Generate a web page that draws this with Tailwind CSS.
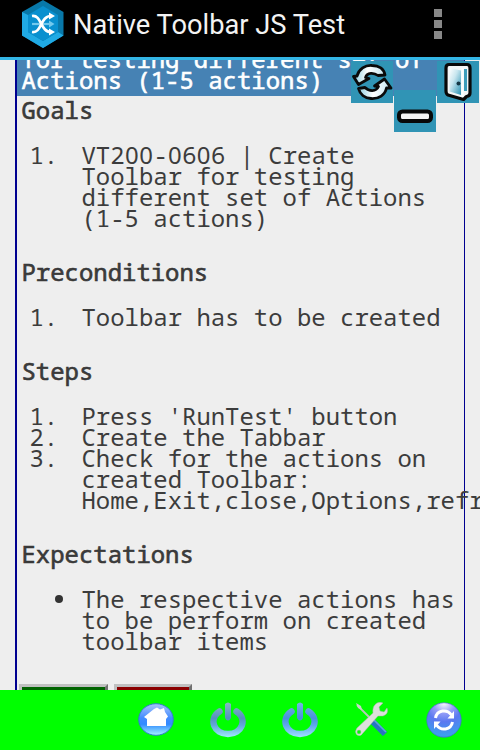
<!DOCTYPE html>
<html lang="en">
<head>
<meta charset="utf-8">
<title>Native Toolbar JS Test</title>
<script src="https://cdn.jsdelivr.net/npm/@tailwindcss/browser@4"></script>
</head>
<body class="w-[480px] h-[750px] overflow-hidden bg-[#eee] flex flex-col text-[#3c3c3c]">
<header class="h-[60px] shrink-0 bg-black border-b-[3px] border-[#33b5e5] flex items-start justify-between pl-[21px] pr-[38px]">
  <div class="flex">
    <svg class="w-[44px] h-[48px] shrink-0" viewBox="0 0 44 48">
      <path d="M22 0 42.500 12V35.500L22 48 1 35.500V12Z" fill="#0878a9"/>
      <path d="M1 12 7 15V32L22 41 37 32 42.500 35.500 22 48 1 35.500Z" fill="#20aae4"/>
      <path d="M22 6 37 15V32L22 41 7 32V15Z" fill="#0990cf"/>
      <path d="M11 24H30" fill="none" stroke="#72c9ed" stroke-width="2.200"/><path d="M28 20.500 33.500 24 28 27.500Z" fill="#72c9ed"/>
      <g fill="none" stroke="#fff" stroke-width="2.700"><path d="M11 16C21 14.500 19 32 30 32M11 32C21 33.500 19 16 30 16"/></g>
      <path d="M28 12.500 34 16 28 19.500ZM28 28.500 34 32 28 35.500Z" fill="#fff"/>
    </svg>
    <h1 class="ml-[8px] mt-[7px] font-[Roboto,sans-serif] font-normal text-[27.250px] leading-[36px] text-[#f3f3f3] whitespace-nowrap">Native Toolbar JS Test</h1>
  </div>
  <div class="flex flex-col gap-[3px] mt-[9px]"><i class="size-[8px] bg-[#888]"></i><i class="size-[8px] bg-[#888]"></i><i class="size-[8px] bg-[#888]"></i></div>
</header>
<main class="relative h-[630px] shrink-0 overflow-hidden font-['Noto_Sans_Mono','DejaVu_Sans_Mono',monospace] text-[23.950px] leading-[21px]">
  <div class="ml-[15px] w-[450px] h-[640px] border-l-2 border-r border-[#000090]">
    <div class="h-[36px] bg-[#4682b4] text-white pl-[4.500px] flex flex-col justify-end pb-[6px] overflow-hidden whitespace-nowrap [-webkit-text-stroke:0.6px_white]"><p>for testing different set of</p><p>Actions (1-5 actions)</p></div>
    <section class="pt-[3px] pl-[4.500px] whitespace-nowrap">
      <h2 class="[-webkit-text-stroke:0.6px_#333]">Goals</h2>
      <div class="flex mt-[24px]"><span class="w-[60px] pl-[8px] shrink-0">1.</span><p>VT2<span class="inline-block w-[14.4px] h-[21px] align-top text-center font-['Noto_Sans']">0</span><span class="inline-block w-[14.4px] h-[21px] align-top text-center font-['Noto_Sans']">0</span>-<span class="inline-block w-[14.4px] h-[21px] align-top text-center font-['Noto_Sans']">0</span>6<span class="inline-block w-[14.4px] h-[21px] align-top text-center font-['Noto_Sans']">0</span>6 | Create<br>Toolbar for testing<br>different set of Actions<br>(1-5 actions)</p></div>
      <h2 class="mt-[33px] [-webkit-text-stroke:0.6px_#333]">Preconditions</h2>
      <div class="flex mt-[24px]"><span class="w-[60px] pl-[8px] shrink-0">1.</span><p>Toolbar has to be created</p></div>
      <h2 class="mt-[33px] [-webkit-text-stroke:0.6px_#333]">Steps</h2>
      <div class="flex mt-[24px]"><span class="w-[60px] pl-[8px] shrink-0">1.</span><p>Press 'RunTest' button</p></div>
      <div class="flex"><span class="w-[60px] pl-[8px] shrink-0">2.</span><p>Create the Tabbar</p></div>
      <div class="flex"><span class="w-[60px] pl-[8px] shrink-0">3.</span><p>Check for the actions on<br>created Toolbar:<br>Home,Exit,close,Options,refresh</p></div>
      <h2 class="mt-[33px] [-webkit-text-stroke:0.6px_#333]">Expectations</h2>
      <div class="flex mt-[24px]"><span class="w-[60px] pl-[33.500px] pt-[7px] shrink-0"><i class="block size-[8px] rounded-full bg-[#333]"></i></span><p>The respective actions has<br>to be perform on created<br>toolbar items</p></div>
    </section>
    <div class="flex gap-[6px] pl-[2px] mt-[33px]">
      <div class="w-[89px] h-[40px] border-[3px] border-t-[#c0c0c0] border-l-[#c0c0c0] border-r-[#707070] border-b-[#707070] bg-[#006400]"></div>
      <div class="w-[78px] h-[40px] border-[3px] border-t-[#c0c0c0] border-l-[#c0c0c0] border-r-[#707070] border-b-[#707070] bg-[#8b0000]"></div>
    </div>
  </div>
  <div class="absolute left-[351px] top-[1px] size-[42px] bg-[#3094b5]">
    <svg viewBox="0 0 42 42" class="size-full"><defs><linearGradient id="r"><stop stop-color="#8fcfe1"/><stop offset=".45" stop-color="#fff"/><stop offset="1" stop-color="#c4e5ef"/></linearGradient></defs>
    <g fill="url(#r)" stroke="#0a0a0a" stroke-width="2.800" stroke-linejoin="round"><path d="M6 15C8 8 14 4 21 4.500 28 4.500 33 8 34 14L27 14.500C23 11.500 16 11 14.500 16.500L18 17.500 7.500 23.500 2.500 15.500Z"/><path d="M7.500 27.500 14 26.500C18 30.500 25 31 27.500 25.500L23.500 25 33.500 18 40 27 35.500 27C34 34 28 38 20 37.500 14 37.500 9 33.500 7.500 27.500Z"/></g></svg>
  </div>
  <div class="absolute left-[394px] top-[30px] size-[42px] bg-[#3094b5]"><svg viewBox="0 0 42 42" class="size-full"><rect x="5" y="21.500" width="32" height="9.500" rx="3.500" fill="#f4f4f4" stroke="#080808" stroke-width="4"/></svg></div>
  <div class="absolute left-[437px] top-[1px] size-[42px] bg-[#3094b5]">
    <svg viewBox="0 0 42 42" class="size-full"><defs><linearGradient id="d" x1="0" y1="0" x2="1" y2="1"><stop stop-color="#fff"/><stop offset=".4" stop-color="#c8e6ef"/><stop offset="1" stop-color="#2790b2"/></linearGradient></defs>
    <path d="M12 3.500H30Q33 3.500 33 7V32Q33 35 29.500 35.500L26.500 38.500 11 34Q9 33 9 30V7Q9 3.500 12 3.500Z" fill="#f3f6f7" stroke="#080808" stroke-width="3.200" stroke-linejoin="round"/><path d="M12.500 7 24 9.500V34L12.500 30.500Z" fill="url(#d)"/><path d="M28.500 8V30" stroke="#3c9dbb" stroke-width="3"/><path d="M25.500 7V36" stroke="#f8ffff" stroke-width="2"/><circle cx="21.500" cy="22.500" r="2" fill="#153744"/></svg>
  </div>
</main>
<footer class="h-[60px] shrink-0 bg-[#0f0] flex justify-end items-start pt-[12px] pr-[18px] gap-[36px]">
  <svg viewBox="0 0 36 36" class="size-[36px]"><defs><linearGradient id="h" x1="0" y1="0" x2="0" y2="1"><stop stop-color="#abc5fb"/><stop offset=".45" stop-color="#438cff"/><stop offset=".65" stop-color="#328bff"/><stop offset="1" stop-color="#a6f4ff"/></linearGradient></defs><ellipse cx="18" cy="17.500" rx="17.300" ry="15.800" fill="url(#h)" stroke="#327ccb"/><path d="M6 15 16 7 19 5.500 22 7.500 26 6 27 10 30 14.500 28 17V24H9V17Z" fill="#fff"/></svg>
  <svg viewBox="0 0 36 36" class="size-[36px]"><defs><linearGradient id="p" gradientUnits="userSpaceOnUse" x1="0" y1="0" x2="0" y2="36"><stop stop-color="#8ab9c4"/><stop offset=".45" stop-color="#5690be"/><stop offset=".65" stop-color="#62a7da"/><stop offset="1" stop-color="#a4eeff"/></linearGradient></defs><path d="M9.500 9.500C-2 17 4 32 18 32S38 17 26.500 9.500" fill="none" stroke="url(#p)" stroke-width="6.500" stroke-linecap="round"/><path d="M15 2Q18 -1 21 2V16Q18 21 15 16Z" fill="url(#p)"/></svg>
  <svg viewBox="0 0 36 36" class="size-[36px]"><defs><linearGradient id="q" gradientUnits="userSpaceOnUse" x1="0" y1="0" x2="0" y2="36"><stop stop-color="#78b5df"/><stop offset=".45" stop-color="#4a90dc"/><stop offset=".65" stop-color="#60a7ed"/><stop offset="1" stop-color="#a4e4ff"/></linearGradient></defs><path d="M9.500 9.500C-2 17 4 32 18 32S38 17 26.500 9.500" fill="none" stroke="url(#q)" stroke-width="6.500" stroke-linecap="round"/><path d="M15 2Q18 -1 21 2V16Q18 21 15 16Z" fill="url(#q)"/></svg>
  <svg viewBox="0 0 36 36" class="size-[36px]"><path d="M3 3 18 18" stroke="#b8c9b8" stroke-width="1.800"/><path d="M2 1 7 4 8 8 4 6Z" fill="#c9d5c9"/><path d="M18 19 31 32" stroke="#2874c2" stroke-width="6"/><path d="M20 18 32 30" stroke="#60a4de" stroke-width="1.500"/><path fill-rule="evenodd" d="M29 1 25 5 26 9 30 10 33 6Q35 12 29 14L24 14 9 31Q7 35 3 33 0 30 3 26L19 11Q18 4 23 1 26-.5 29 1ZM5 28A2 2 0 1 0 5 32 2 2 0 1 0 5 28Z" fill="#dce0dc" stroke="#a7b5a7" stroke-width=".5"/></svg>
  <svg viewBox="0 0 36 36" class="size-[36px]"><defs><radialGradient id="s" cx=".5" cy="0" r="1"><stop stop-color="#fff"/><stop offset=".3" stop-color="#959df7"/><stop offset=".55" stop-color="#5b78f0"/><stop offset="1" stop-color="#38a4ed"/></radialGradient></defs><circle cx="18" cy="18" r="17.200" fill="url(#s)" stroke="#4b66cf" stroke-width=".7"/><g fill="none" stroke="#fff" stroke-width="3"><path d="M9.500 16C11 8 21 6.500 25.500 13"/><path d="M26.500 20C25 28 15 29.500 10.500 23"/></g><path d="M28 9V16.500H21.500ZM8 27V19.500H14.500Z" fill="#fff"/></svg>
</footer>
</body>
</html>
